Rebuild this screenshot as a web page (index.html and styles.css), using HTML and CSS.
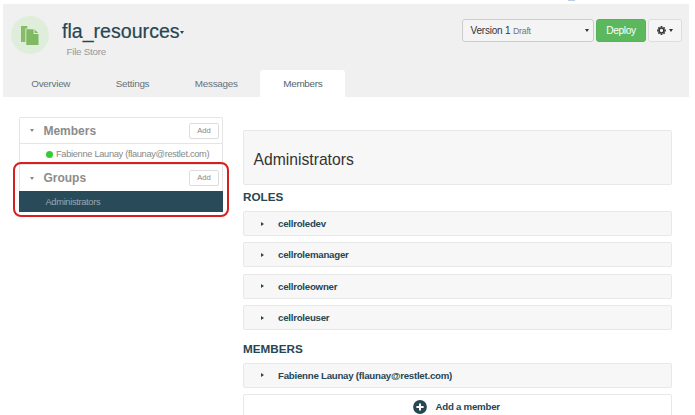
FILE: index.html
```html
<!DOCTYPE html>
<html lang="en">
<head>
<meta charset="utf-8">
<title>fla_resources</title>
<link rel="stylesheet" href="styles.css">
</head>
<body>
<div class="top-strip"><span class="top-mark"></span></div>
<header class="header">
  <div class="header-main">
    <div class="logo">
      <svg width="18" height="19" viewBox="0 0 18 19"><path d="M0 0H6.3V2.4H4.4V16H0Z" fill="#86bd68"/><path d="M5.3 3.3H12.6V8H17.5V19H5.3Z" fill="#7fb961"/><path d="M13.6 3.6L17.3 7.1H13.6Z" fill="#7fb961"/></svg>
    </div>
    <div class="heading">
      <h1 class="title">fla_resources<i class="caret caret-title"></i></h1>
      <div class="subtitle">File Store</div>
    </div>
    <div class="actions">
      <div class="select"><span>Version 1 <small>Draft</small></span><i class="caret"></i></div>
      <button class="deploy">Deploy</button>
      <button class="gear">
        <svg width="9" height="9" viewBox="-4.5 -4.5 9 9"><circle r="2.5" fill="none" stroke="#333" stroke-width="1.7"/><path d="M0-4.4V-3M0 4.4V3M-4.4 0H-3M4.4 0H3M-3.1-3.1L-2.2-2.2M3.1 3.1L2.2 2.2M-3.1 3.1L-2.2 2.2M3.1-3.1L2.2-2.2" stroke="#333" stroke-width="1.8"/></svg>
        <i class="caret"></i>
      </button>
    </div>
  </div>
  <nav class="tabs">
    <a class="tab">Overview</a>
    <a class="tab">Settings</a>
    <a class="tab">Messages</a>
    <a class="tab active">Members</a>
  </nav>
</header>
<main class="content">
  <aside class="sidebar">
    <div class="side-head"><i class="caret"></i><h2>Members</h2><button class="add">Add</button></div>
    <div class="side-item"><i class="dot"></i><span>Fabienne Launay (flaunay@restlet.com)</span></div>
    <div class="side-head groups"><i class="caret"></i><h2>Groups</h2><button class="add">Add</button></div>
    <div class="side-item selected"><span>Administrators</span></div>
    <div class="highlight"></div>
  </aside>
  <section class="detail">
    <div class="panel-title">Administrators</div>
    <h3>ROLES</h3>
    <div class="rows">
      <div class="row"><i class="arrow"></i><span>cellroledev</span></div>
      <div class="row"><i class="arrow"></i><span>cellrolemanager</span></div>
      <div class="row"><i class="arrow"></i><span>cellroleowner</span></div>
      <div class="row"><i class="arrow"></i><span>cellroleuser</span></div>
    </div>
    <h3 class="members-title">MEMBERS</h3>
    <div class="rows">
      <div class="row person"><i class="arrow"></i><span>Fabienne Launay (flaunay@restlet.com)</span></div>
      <div class="row add-row">
        <svg width="14" height="14" viewBox="0 0 14 14"><circle cx="7" cy="7" r="6.9" fill="#264653"/><path d="M7 3.4V10.6M3.4 7H10.6" stroke="#fff" stroke-width="2"/></svg>
        <span>Add a member</span>
      </div>
    </div>
  </section>
</main>
</body>
</html>
```

FILE: styles.css
```css
* { box-sizing: border-box; }
html, body { height: 415px; overflow: hidden; }
body { margin: 0; background: #fff; font-family: "Liberation Sans", Arial, sans-serif; font-size: 9.3px; color: #333; }
h1, h2, h3 { margin: 0; }
button { font-family: inherit; padding: 0; }
.top-strip { height: 4px; padding-left: 568px; }
.top-mark { display: block; width: 7px; height: 1px; background: #bccbe6; }
.header { width: 686px; height: 93px; margin-left: 3px; background: #f0f0f0; display: flex; flex-direction: column; justify-content: space-between; }
.header-main { display: flex; padding: 12px 7px 0 8px; height: 66px; }
.logo { width: 38px; height: 38px; border-radius: 50%; background: #dfeeda; display: flex; align-items: center; justify-content: center; flex: none; }
.heading { margin-left: 13px; }
.title { font-size: 19.6px; line-height: 30px; font-weight: 400; color: #264653; -webkit-text-stroke: 0.2px #264653; display: flex; align-items: center; white-space: nowrap; }
.subtitle { margin-left: 4.5px; line-height: 12px; margin-top: 0; font-size: 9.8px; letter-spacing: -0.25px; color: #999; }
.caret { display: block; flex: none; width: 0; height: 0; border: 2.5px solid transparent; border-width: 3px 2.5px 0; border-top-color: #333; }
.caret-title { border-top-color: #264653; margin-top: 2px; }
.actions { display: flex; margin: 3px 0 0 auto; gap: 2px; height: 23px; }
.select { width: 132px; height: 23px; padding: 0 4px 0 7.5px; border: 1px solid #ccc; border-radius: 3px; background: #f4f4f4; display: flex; align-items: center; justify-content: space-between; font-size: 10px; letter-spacing: -0.2px; }
.select small { font-size: 8.8px; letter-spacing: -0.25px; color: #777; }
.deploy { width: 50px; border: 1px solid #55b355; border-radius: 3px; background: #5cb85c; color: #fff; font-size: 10.2px; letter-spacing: -0.4px; }
.gear { width: 34px; border: 1px solid #ddd; border-radius: 3px; background: #f5f5f5; display: flex; align-items: center; justify-content: center; gap: 3px; }
.tabs { display: flex; height: 27px; padding-left: 5.5px; }
.tab { padding: 0 22.8px; line-height: 28px; font-size: 9.9px; letter-spacing: -0.28px; color: #65727b; }
.active { background: #fff; border-radius: 3px 3px 0 0; color: #53636e; }
.content { display: flex; padding-left: 19px; }
.sidebar { position: relative; width: 204px; height: 96px; margin-top: 20px; color: #888; border: 1px solid #e5e5e5; border-bottom: 0; border-radius: 2px 2px 0 0; }
.side-head { height: 26px; display: flex; align-items: center; padding: 0 3px 0 10px; border-bottom: 1px solid #e5e5e5; }
.side-head h2 { font-size: 12px; margin-left: 9.4px; color: #8c8c8c; line-height: 14px; }
.side-head .caret { border-top-color: #888; }
.add { margin-left: auto; width: 30px; height: 16px; border: 1px solid #ddd; border-radius: 2px; background: #fff; color: #888; font-size: 7.6px; line-height: 14px; }
.side-item { height: 20px; display: flex; align-items: center; padding-left: 26px; white-space: nowrap; font-size: 9.3px; letter-spacing: -0.33px; }
.dot { width: 7px; height: 7px; border-radius: 50%; background: #3c3; margin-right: 3px; }
.groups { border-top: 1px solid #e5e5e5; border-bottom: 0; height: 27px; }
.selected { margin: 0 -1px; height: 21px; background: #284a59; color: #9aa8af; padding-left: 26.5px; }
.highlight { position: absolute; left: -7px; top: 44px; width: 216px; height: 55px; border: 2px solid #d61f1f; border-radius: 8px; }
.detail { width: 429px; margin: 33px 0 0 20px; color: #264653; }
.panel-title { height: 55px; border: 1px solid #e8e8e8; border-radius: 2px; background: #f7f7f7; display: flex; align-items: center; padding: 4px 0 0 9.5px; font-size: 15.7px; color: #333; }
h3 { height: 26px; line-height: 24px; font-size: 11.7px; color: #264653; }
.rows { display: grid; gap: 6.4px; }
.row { height: 25px; border: 1px solid #e8e8e8; border-radius: 2px; background: #f7f7f7; display: flex; align-items: center; padding-left: 17px; font-size: 9.7px; letter-spacing: -0.25px; font-weight: 700; }
.row span { margin-left: 14px; }
.arrow { display: block; width: 0; height: 0; border: 2.5px solid transparent; border-left: 3px solid #264653; border-right: 0; }
.members-title { height: 32.8px; line-height: 38px; }
.add-row { background: #fff; padding-left: 169px; }
.add-row span { margin-left: 8.5px; }
```
